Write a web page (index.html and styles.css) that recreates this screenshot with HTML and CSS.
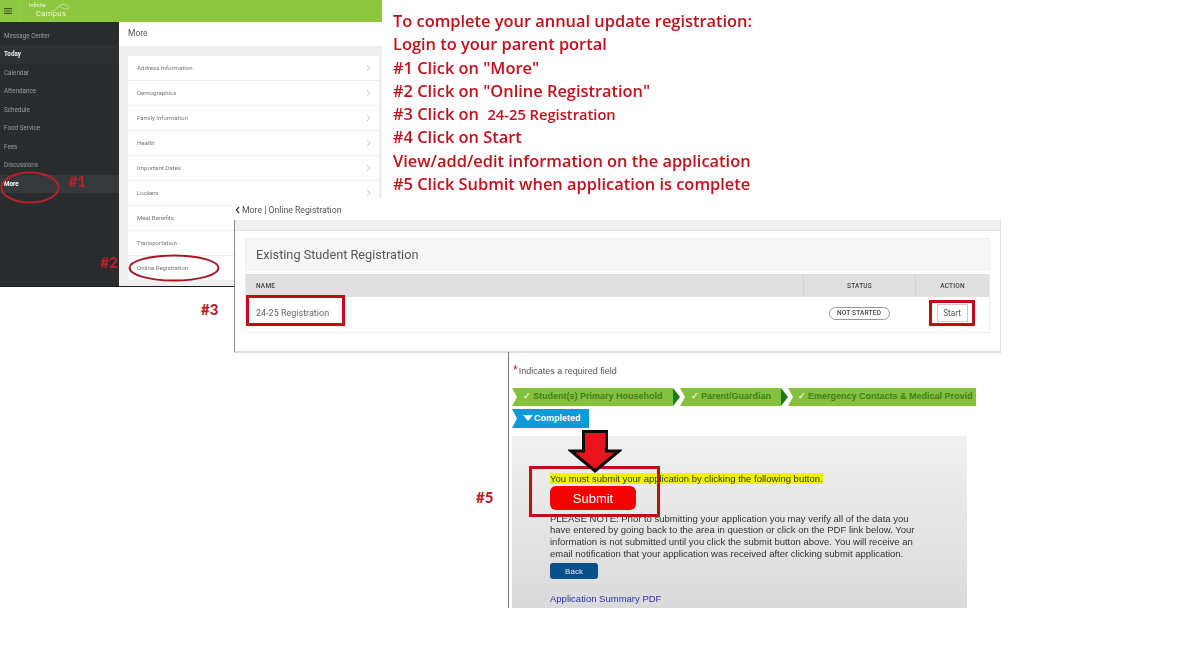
FILE: index.html
```html
<!DOCTYPE html>
<html lang="en">
<head>
<meta charset="utf-8">
<title>Annual update registration</title>
<link rel="stylesheet" href="styles.css">
</head>
<body>
<main class="canvas">
  <section class="portal">
    <header class="topbar">
      <svg class="burger" viewBox="0 0 10 8" aria-hidden="true"><path d="M0 1h10M0 4h10M0 7h10" stroke="#3f5a25" stroke-width="1.400"/></svg>
      <span class="topbar-sep"></span>
      <div class="logo">
        <span class="logo-small">Infinite</span>
        <span class="logo-big">Campus</span>
        <svg class="logo-swirl" viewBox="0 0 30 14" aria-hidden="true"><path d="M1 11C6 12 9 9 11 6S17 1 21 2s7 3 6 5-6 2-9 0-6-3-8 0" fill="none" stroke="#e4f0cf" stroke-width=".8"/></svg>
      </div>
    </header>
    <div class="portal-body">
      <nav class="sidebar">
        <a class="nav-item">Message Center</a>
        <a class="nav-item nav-today">Today</a>
        <a class="nav-item">Calendar</a>
        <a class="nav-item">Attendance</a>
        <a class="nav-item">Schedule</a>
        <a class="nav-item">Food Service</a>
        <a class="nav-item">Fees</a>
        <a class="nav-item">Discussions</a>
        <a class="nav-item nav-more">More</a>
      </nav>
      <div class="more">
        <h2 class="more-title">More</h2>
        <div class="more-bg">
          <ul class="more-list">
            <li class="more-row">Address Information<svg class="chev" viewBox="0 0 5 8" aria-hidden="true"><path d="M1 1l3 3-3 3" fill="none" stroke="#b5b5b5" stroke-width=".8"/></svg></li>
            <li class="more-row">Demographics<svg class="chev" viewBox="0 0 5 8" aria-hidden="true"><path d="M1 1l3 3-3 3" fill="none" stroke="#b5b5b5" stroke-width=".8"/></svg></li>
            <li class="more-row">Family Information<svg class="chev" viewBox="0 0 5 8" aria-hidden="true"><path d="M1 1l3 3-3 3" fill="none" stroke="#b5b5b5" stroke-width=".8"/></svg></li>
            <li class="more-row">Health<svg class="chev" viewBox="0 0 5 8" aria-hidden="true"><path d="M1 1l3 3-3 3" fill="none" stroke="#b5b5b5" stroke-width=".8"/></svg></li>
            <li class="more-row">Important Dates<svg class="chev" viewBox="0 0 5 8" aria-hidden="true"><path d="M1 1l3 3-3 3" fill="none" stroke="#b5b5b5" stroke-width=".8"/></svg></li>
            <li class="more-row">Lockers<svg class="chev" viewBox="0 0 5 8" aria-hidden="true"><path d="M1 1l3 3-3 3" fill="none" stroke="#b5b5b5" stroke-width=".8"/></svg></li>
            <li class="more-row">Meal Benefits</li>
            <li class="more-row">Transportation</li>
            <li class="more-row">Online Registration</li>
          </ul>
        </div>
      </div>
    </div>
  </section>

  <section class="instructions">
    <p>To complete your annual update registration:</p>
    <p>Login to your parent portal</p>
    <p>#1 Click on "More"</p>
    <p>#2 Click on "Online Registration"</p>
    <p>#3 Click on &nbsp;<span class="instr-small">24-25 Registration</span></p>
    <p>#4 Click on Start</p>
    <p>View/add/edit information on the application</p>
    <p>#5 Click Submit when application is complete</p>
  </section>

  <section class="registration">
    <div class="crumb"><svg class="crumb-chev" viewBox="0 0 6 10" aria-hidden="true"><path d="M5 1 1.500 5 5 9" fill="none" stroke="#333" stroke-width="1.600"/></svg>More | Online Registration</div>
    <div class="reg-frame">
      <div class="reg-band"></div>
      <div class="reg-inner">
        <div class="card">
          <h2 class="card-title">Existing Student Registration</h2>
          <div class="table-head">
            <span class="col-name">NAME</span>
            <span class="col-status">STATUS</span>
            <span class="col-action">ACTION</span>
          </div>
          <div class="table-row">
            <span class="col-name row-name">24-25 Registration</span>
            <span class="col-status"><span class="pill">NOT STARTED</span></span>
            <span class="col-action"><span class="start">Start</span></span>
          </div>
        </div>
      </div>
    </div>
  </section>

  <section class="application">
    <p class="required"><span class="star">*</span>Indicates a required field</p>
    <div class="steps">
      <span class="step step-1"><span class="tick">&#10003;</span>Student(s) Primary Household</span>
      <span class="sep"></span>
      <span class="step step-2"><span class="tick">&#10003;</span>Parent/Guardian</span>
      <span class="sep"></span>
      <span class="step step-3"><span class="tick">&#10003;</span>Emergency Contacts &amp; Medical Provid</span>
    </div>
    <div class="step-done"><span class="tri"></span>Completed</div>
    <div class="submit-box">
      <p class="must"><mark class="hl">You must submit your application by clicking the following button.</mark></p>
      <button class="submit" type="button">Submit</button>
      <p class="note">PLEASE NOTE: Prior to submitting your application you may verify all of the data you have entered by going back to the area in question or click on the PDF link below. Your information is not submitted until you click the submit button above. You will receive an email notification that your application was received after clicking submit application.</p>
      <button class="back" type="button">Back</button>
      <a class="pdf">Application Summary PDF</a>
    </div>
  </section>

  <svg class="ring ring-1" viewBox="0 0 60 33" aria-hidden="true"><ellipse cx="30" cy="16.500" rx="28.500" ry="15" fill="none" stroke="#bd1f2a" stroke-width="2"/></svg>
  <svg class="ring ring-2" viewBox="0 0 92 28" aria-hidden="true"><ellipse cx="46" cy="14" rx="44.500" ry="12.500" fill="none" stroke="#a51722" stroke-width="2"/></svg>
  <span class="tag tag-1">#1</span>
  <span class="tag tag-2">#2</span>
  <span class="tag tag-3">#3</span>
  <span class="tag tag-5">#5</span>
  <span class="box box-name"></span>
  <span class="box box-start"></span>
  <span class="box box-submit"></span>
  <svg class="arrow" viewBox="0 0 54 43" aria-hidden="true"><path d="M15.500 1.500h23V21H51L27 41 3 21h12.500z" fill="#e8141e" stroke="#0c0c0c" stroke-width="3"/></svg>
</main>
</body>
</html>
```

FILE: styles.css
```css
* { box-sizing: border-box; }
html, body { margin: 0; padding: 0; background: #fff; }
p, h2, ul { margin: 0; padding: 0; }
ul { list-style: none; }
.canvas { position: relative; width: 1200px; height: 662px; overflow: hidden; font-family: Roboto, sans-serif; }

/* Portal screenshot */
.portal { position: absolute; left: 0; top: 0; width: 382px; height: 287px; display: flex; flex-direction: column; filter: blur(.4px); }
.topbar { height: 22px; background: #8dc63f; display: flex; align-items: center; padding-left: 4px; }
.burger { width: 8px; height: 8px; }
.topbar-sep { width: 1px; height: 22px; background: #97cc4f; margin-left: 8px; }
.logo { position: relative; width: 44px; height: 18px; margin-left: 8px; color: #eef6df; }
.logo-small { position: absolute; left: 0; top: 1.300px; font-size: 5.500px; line-height: 5px; }
.logo-big { position: absolute; left: 7px; top: 8px; font-size: 7.500px; line-height: 7px; letter-spacing: .4px; }
.logo-swirl { position: absolute; left: 21px; top: 1px; width: 21px; height: 10px; }
.portal-body { flex: 1; display: flex; border-bottom: 1.500px solid #1c1c1c; }
.sidebar { width: 119px; background: #292c2f; padding-top: 4.500px; display: flex; flex-direction: column; }
.nav-item { height: 18.500px; line-height: 18.500px; padding-left: 4px; font-size: 6.300px; color: #9b9ea0; }
.nav-today { color: #e8e8e8; font-weight: 700; background: #2e3134; }
.nav-more { color: #fff; font-weight: 700; background: #36393c; }
.more { flex: 1; display: flex; flex-direction: column; background: #fff; }
.more-title { height: 24px; line-height: 23px; padding-left: 9px; font-size: 8.500px; font-weight: 400; color: #555; }
.more-bg { flex: 1; background: #efefef; padding: 9.500px 3px 0 9px; }
.more-list { background: #fff; }
.more-row { height: 25px; display: flex; align-items: center; justify-content: space-between; padding: 0 9px; font-size: 6.100px; color: #777; border-bottom: 1px solid #eee; }
.chev { width: 5px; height: 8px; margin-right: -1px; }

/* Instructions */
.instructions { position: absolute; left: 393px; top: 9px; color: #c4101b; font-family: "Open Sans", sans-serif; font-size: 16.400px; font-weight: 600; line-height: 23.300px; white-space: nowrap; filter: blur(.25px); }
.instructions p { height: 23.300px; }
.instr-small { font-size: 14.700px; line-height: 1; }

/* Registration screenshot */
.registration { position: absolute; left: 232px; top: 198px; width: 769px; height: 155px; display: flex; flex-direction: column; filter: blur(.3px); }
.crumb { height: 22px; width: 150px; background: #fff; display: flex; align-items: center; padding: 2px 0 0 3px; font-size: 8.700px; color: #555; white-space: nowrap; }
.crumb-chev { width: 5px; height: 8px; margin-right: 2px; }
.reg-frame { flex: 1; margin-left: 2px; display: flex; flex-direction: column; background: #fff; border-left: 1px solid #888; border-right: 1px solid #e2e2e2; border-bottom: 2px solid #ddd; }
.reg-band { height: 11px; background: #f1f1f1; border-bottom: 1px solid #e4e4e4; }
.reg-inner { padding: 7px 10px 0; }
.card { border: 1px solid #eee; }
.card-title { height: 32px; line-height: 31px; padding-left: 10px; background: #f6f6f6; font-size: 12.700px; font-weight: 400; color: #555; margin-bottom: 3px; }
.table-head, .table-row { display: flex; align-items: center; }
.table-head { height: 23px; background: #e0e0e0; font-size: 6.500px; font-weight: 500; color: #444; letter-spacing: .2px; }
.table-row { height: 35px; background: #fff; }
.col-name { flex: 1; padding-left: 10px; }
.col-status { width: 112px; display: flex; align-items: center; justify-content: center; }
.col-action { width: 74px; display: flex; align-items: center; justify-content: center; }
.table-head .col-status, .table-head .col-action { height: 23px; border-left: 1px solid #d2d2d2; }
.row-name { font-size: 9px; color: #666; padding-bottom: 3px; }
.pill { width: 61px; height: 13px; line-height: 11px; text-align: center; border: 1px solid #999; border-radius: 7px; font-size: 6.500px; font-weight: 500; color: #444; letter-spacing: .2px; margin-bottom: 3px; }
.start { width: 31px; height: 18px; line-height: 16px; text-align: center; border: 1px solid #ccc; font-size: 8.200px; color: #555; margin-bottom: 3px; }

/* Application screenshot */
.application { position: absolute; left: 508px; top: 352px; width: 468px; height: 256px; border-left: 1px solid #777; padding-left: 3px; overflow: hidden; font-family: "Liberation Sans", sans-serif; display: flex; flex-direction: column; filter: blur(.25px); }
.required { height: 36px; padding: 12px 0 0 1px; font-size: 9px; line-height: 13px; color: #555; }
.star { color: #d11; font-size: 12px; line-height: 1; margin-right: 1px; }
.steps { display: flex; height: 18px; white-space: nowrap; overflow: hidden; font-size: 9px; font-weight: 700; color: #3f7f1c; flex: none; }
.step { height: 18px; line-height: 17px; background: #85c13d; padding-left: 11px; flex: none; clip-path: polygon(0 0, 100% 0, 100% 100%, 0 100%, 5px 50%); }
.step-1 { width: 161px; }
.step-2 { width: 101px; }
.step-3 { flex: 1 0 auto; padding-left: 10px; }
.tick { display: inline-block; width: 10px; color: #e5f3d2; }
.sep { width: 7px; height: 18px; background: #1a7a16; flex: none; clip-path: polygon(0 0, 100% 50%, 0 100%); }
.step-done { margin-top: 3px; width: 77px; height: 19px; background: #0e9ad7; color: #fff; font-size: 9px; font-weight: 700; padding: 0 0 1px 11px; clip-path: polygon(0 0, 100% 0, 100% 100%, 0 100%, 5px 50%); display: flex; align-items: center; flex: none; }
.tri { width: 0; height: 0; border-left: 5px solid transparent; border-right: 5px solid transparent; border-top: 6px solid #fff; margin-right: 1px; }
.submit-box { margin-top: 8px; width: 455px; flex: 1; background: linear-gradient(#f1f1f1, #dadada); padding: 36px 0 0 38px; font-size: 9.500px; color: #333; }
.must { line-height: 13px; height: 13px; }
.hl { background: #f2f200; color: #333; }
.submit { display: block; width: 86px; height: 24px; margin-top: 1px; border: 0; border-radius: 6px; background: #f40000; color: #fff; font: 400 13px "Liberation Sans", sans-serif; padding: 0; }
.note { width: 366px; margin-top: 2.500px; line-height: 11.700px; }
.back { display: block; width: 48px; height: 16px; margin-top: 4px; border: 0; border-radius: 3px; background: #07508c; color: #dfe9f2; font: 8px "Liberation Sans", sans-serif; padding: 0; }
.pdf { display: block; margin-top: 14px; color: #2f2fb5; font-size: 9.500px; }

/* Annotations over the collage */
.ring { position: absolute; }
.ring-1 { left: 0; top: 171px; width: 60px; height: 33px; }
.ring-2 { left: 128px; top: 254px; width: 92px; height: 28px; }
.tag { position: absolute; color: #b81f28; font-family: Lato, sans-serif; font-size: 15px; font-weight: 900; line-height: 16px; }
.tag-1 { left: 68px; top: 173px; }
.tag-2 { left: 100px; top: 254px; }
.tag-3 { left: 201px; top: 301px; }
.tag-5 { left: 476px; top: 489px; }
.box { position: absolute; border: 3px solid #c40a14; }
.box-name { left: 246px; top: 295px; width: 99px; height: 31px; }
.box-start { left: 929px; top: 300px; width: 46px; height: 26px; }
.box-submit { left: 529px; top: 466px; width: 131px; height: 51px; }
.arrow { position: absolute; left: 568px; top: 430px; width: 54px; height: 43px; }
```
